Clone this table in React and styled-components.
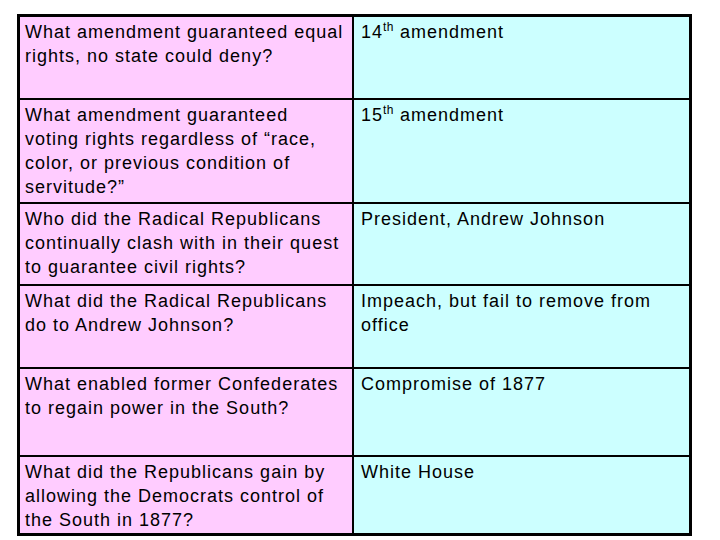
import React from 'react';
import styled, { createGlobalStyle } from 'styled-components';

const Global = createGlobalStyle`
  body {
    margin: 0;
    background: #ffffff;
    font-family: "Liberation Sans", Arial, sans-serif;
  }
`;

const Table = styled.div`
  margin: 14px 0 0 17px;
  width: 675px;
  box-sizing: border-box;
  border: 3px solid #000;
  background: #000;
  display: grid;
  grid-template-columns: 332px 335px;
  grid-template-rows: 81px 102px 80px 81px 86px 76px;
  gap: 2px;
`;

const Cell = styled.div`
  background: ${(p) => (p.$answer ? '#ccffff' : '#ffccff')};
  padding: 3px 6px 0 ${(p) => (p.$answer ? '7px' : '5px')};
  font-size: 18px;
  line-height: 24px;
  letter-spacing: 1px;
  color: #000;
`;

const Sup = styled.sup`
  font-size: 12px;
  line-height: 0;
  letter-spacing: 0.5px;
  vertical-align: 7px;
`;

const rows = [
  ['What amendment guaranteed equal rights, no state could deny?', <>14<Sup>th</Sup> amendment</>],
  ['What amendment guaranteed voting rights regardless of \u201crace, color, or previous condition of servitude?\u201d', <>15<Sup>th</Sup> amendment</>],
  ['Who did the Radical Republicans continually clash with in their quest to guarantee civil rights?', 'President, Andrew Johnson'],
  ['What did the Radical Republicans do to Andrew Johnson?', 'Impeach, but fail to remove from office'],
  ['What enabled former Confederates to regain power in the South?', 'Compromise of 1877'],
  ['What did the Republicans gain by allowing the Democrats control of the South in 1877?', 'White House'],
];

export default function App() {
  return (
    <>
      <Global />
      <Table>
        {rows.map(([q, a], i) => (
          <React.Fragment key={i}>
            <Cell>{q}</Cell>
            <Cell $answer>{a}</Cell>
          </React.Fragment>
        ))}
      </Table>
    </>
  );
}
